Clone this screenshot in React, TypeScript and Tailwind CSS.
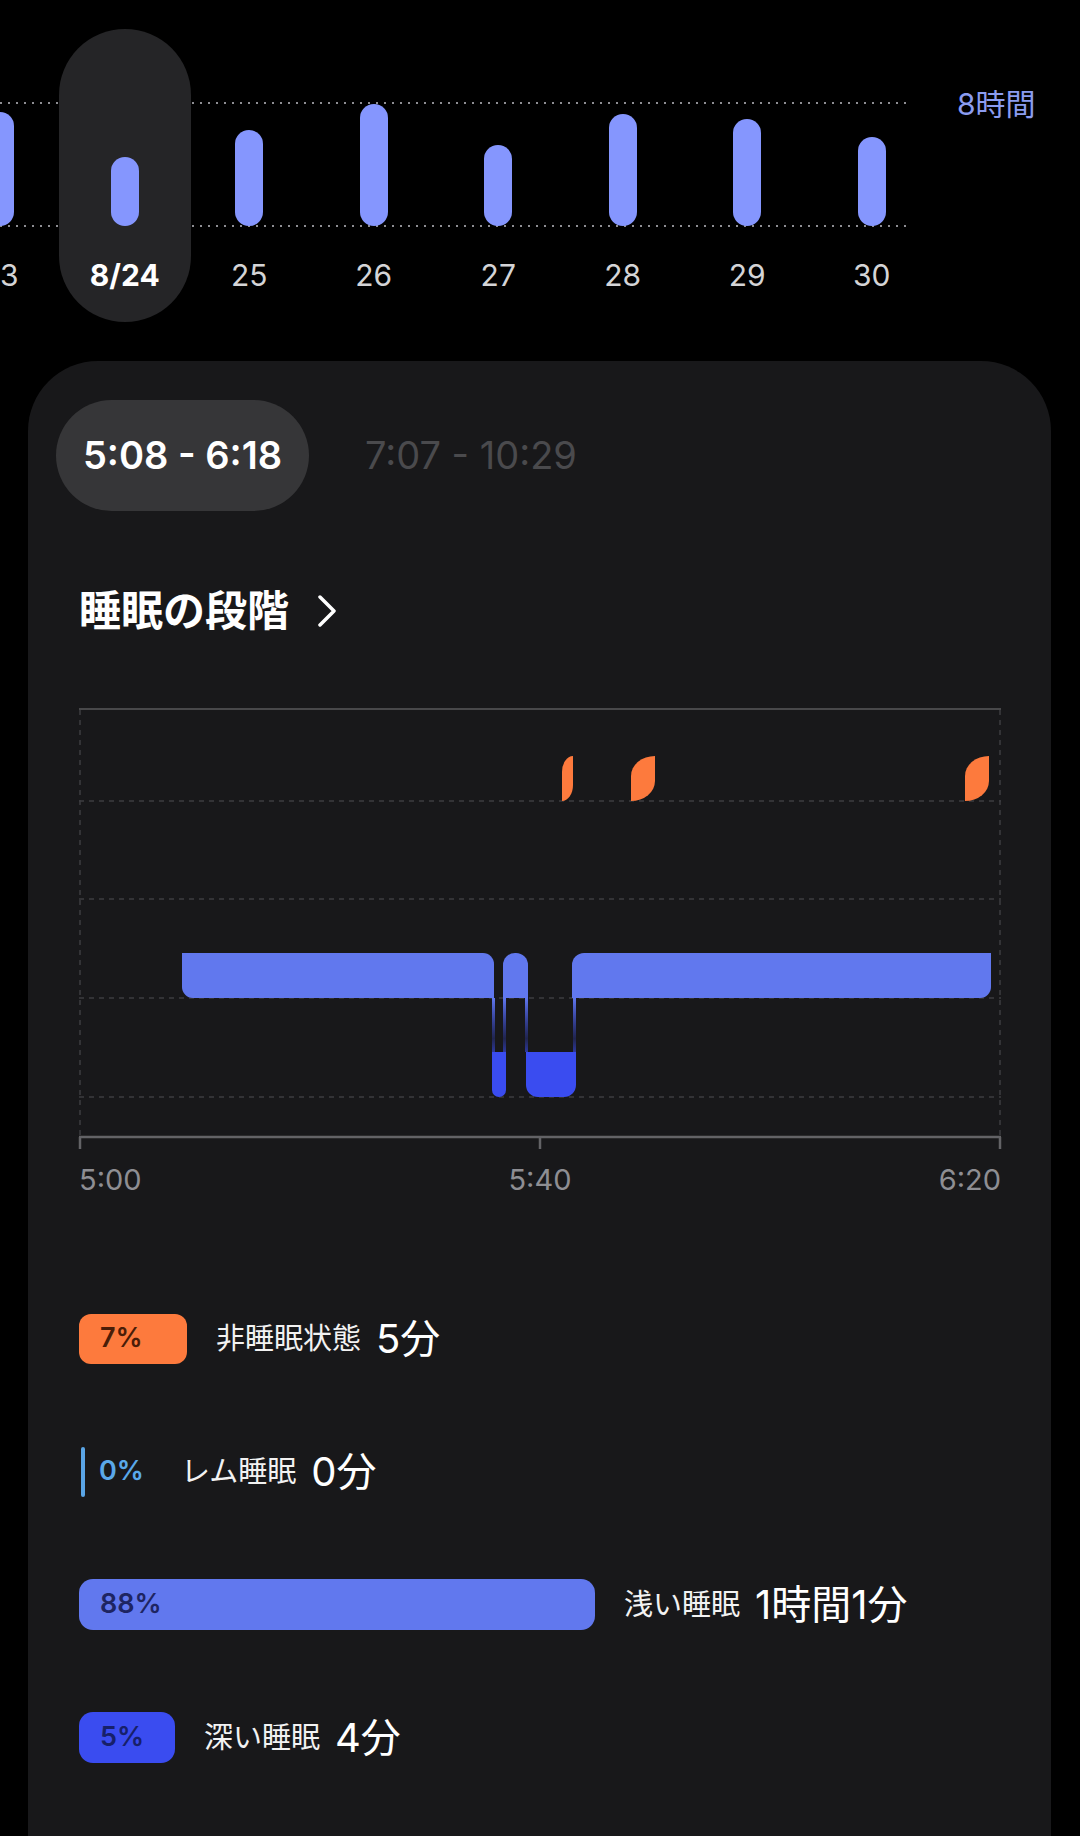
import React from "react";

type Day = { label: string; h: number; active?: boolean };

const days: Day[] = [
  { label: "23", h: 114 },
  { label: "8/24", h: 69, active: true },
  { label: "25", h: 96 },
  { label: "26", h: 122 },
  { label: "27", h: 81 },
  { label: "28", h: 112 },
  { label: "29", h: 107 },
  { label: "30", h: 89 },
];

// rect with per-corner radii: tl, tr, br, bl
function rr(x: number, y: number, w: number, h: number, r: [number, number, number, number]) {
  const [tl, tr, br, bl] = r;
  return `M${x + tl},${y} H${x + w - tr} A${tr},${tr} 0 0 1 ${x + w},${y + tr} V${y + h - br} A${br},${br} 0 0 1 ${x + w - br},${y + h} H${x + bl} A${bl},${bl} 0 0 1 ${x},${y + h - bl} V${y + tl} A${tl},${tl} 0 0 1 ${x + tl},${y} Z`;
}

function leaf(x: number, w: number, r: number) {
  const top = 48;
  const bottom = 93;
  return `M${x},${bottom} V${top + r} A${w},${r} 0 0 1 ${x + w},${top} V${bottom - r} A${w},${r} 0 0 1 ${x},${bottom} Z`;
}

function DayColumn({ d }: { d: Day }) {
  return (
    <div className="relative mt-[29px] flex h-[293px] w-[124.5px] flex-none flex-col items-center">
      {d.active && <div className="absolute inset-y-0 -inset-x-[4px] rounded-full bg-[#252527]" />}
      <div className="relative mt-[74px] flex h-[123px] items-end">
        <div className="w-[28px] rounded-full bg-[#8596fe]" style={{ height: d.h }} />
      </div>
      <div
        className={
          d.active
            ? "relative mt-[31px] text-[30px] leading-[36px] font-bold text-white"
            : "relative mt-[31px] text-[30px] leading-[36px] text-[#d4d4d6]"
        }
      >
        {d.label}
      </div>
    </div>
  );
}

function StageChart() {
  const light = "#6178ee";
  const deep = "#3a4cf0";
  return (
    <svg width="922" height="442" className="overflow-visible">
      <defs>
        <linearGradient id="conn" x1="0" y1="0" x2="0" y2="1">
          <stop offset="0" stopColor={light} stopOpacity="1" />
          <stop offset="0.75" stopColor={deep} stopOpacity="0.25" />
          <stop offset="1" stopColor={deep} stopOpacity="0.6" />
        </linearGradient>
      </defs>
      {/* grid */}
      <line x1="0" y1="1" x2="922" y2="1" stroke="#48484a" strokeWidth="2" />
      {[93, 191, 290, 389].map((y) => (
        <line key={y} x1="0" y1={y} x2="922" y2={y} stroke="#3d3d40" strokeWidth="1.5" strokeDasharray="5 5" />
      ))}
      <line x1="1" y1="2" x2="1" y2="429" stroke="#3d3d40" strokeWidth="1.5" strokeDasharray="5 5" />
      <line x1="921" y1="2" x2="921" y2="429" stroke="#3d3d40" strokeWidth="1.5" strokeDasharray="5 5" />
      <line x1="0" y1="429" x2="922" y2="429" stroke="#636366" strokeWidth="2.5" />
      {[1, 461, 921].map((x) => (
        <line key={x} x1={x} y1="429" x2={x} y2="441" stroke="#636366" strokeWidth="2.5" />
      ))}

      {/* connectors */}
      {[413, 424, 446, 494].map((x) => (
        <rect key={x} x={x} y="290" width="3" height="54" fill="url(#conn)" />
      ))}

      {/* light sleep */}
      <path d={rr(103, 245, 312, 45, [0, 11, 0, 11])} fill={light} />
      <path d={rr(424, 245, 25, 45, [12, 12, 0, 0])} fill={light} />
      <path d={rr(493, 245, 419, 45, [12, 0, 11, 0])} fill={light} />

      {/* deep sleep */}
      <path d={rr(413, 344, 14, 45, [0, 0, 7, 7])} fill={deep} />
      <path d={rr(447, 344, 50, 45, [0, 0, 12, 12])} fill={deep} />

      {/* awake */}
      <path d={leaf(483, 11, 16)} fill="#fd7a3d" />
      <path d={leaf(552, 24, 20)} fill="#fd7a3d" />
      <path d={leaf(886, 24, 20)} fill="#fd7a3d" />
    </svg>
  );
}

export default function App() {
  return (
    <div className="h-[1836px] overflow-hidden bg-black font-['Inter','Noto_Sans_CJK_JP',sans-serif]">
      {/* Week bars */}
      <div className="relative h-[361px]">
        <div className="absolute left-0 top-[102px] h-[2px] w-[911px] bg-[repeating-linear-gradient(90deg,#8e8e93_0_2px,transparent_2px_8px)]" />
        <div className="absolute left-0 top-[225px] h-[2px] w-[911px] bg-[repeating-linear-gradient(90deg,#8e8e93_0_2px,transparent_2px_8px)]" />
        <div className="relative -ml-[62px] flex">
          {days.map((d) => (
            <DayColumn key={d.label} d={d} />
          ))}
          <div className="ml-[23px] mt-[86px] flex-none text-[30px] leading-[36px] text-[#8b9cf0]">8時間</div>
        </div>
      </div>

      {/* Card */}
      <div className="ml-[28px] h-[1475px] w-[1023px] rounded-t-[70px] bg-[#18181a]">
        <div className="flex items-center pl-[28px] pt-[39px]">
          <div className="flex h-[111px] w-[253px] items-center justify-center rounded-full bg-[#363638] text-[38px] font-semibold text-white">
            5:08 - 6:18
          </div>
          <div className="ml-[56px] text-[38px] text-[#4a4a4d]">7:07 - 10:29</div>
        </div>

        <div className="px-[51px]">
          <div className="mt-[75px] flex h-[50px] items-center">
            <span className="text-[42px] leading-[50px] font-bold text-white">睡眠の段階</span>
            <svg width="20" height="32" viewBox="0 0 20 32" className="ml-[28px]">
              <path d="M3 2 L17 16 L3 30" fill="none" stroke="white" strokeWidth="3.5" strokeLinecap="round" strokeLinejoin="round" />
            </svg>
          </div>

          <div className="mt-[72px]">
            <StageChart />
          </div>
          <div className="mt-[12px] grid w-[922px] grid-cols-3 text-[29px] leading-[36px] text-[#8e8e93]">
            <span className="text-left">5:00</span>
            <span className="text-center">5:40</span>
            <span className="text-right">6:20</span>
          </div>

          {/* Legend */}
          <div className="mt-[115px] flex flex-col gap-[82px]">
            <div className="flex h-[51px] items-center">
              <div className="flex h-[50px] w-[108px] items-center rounded-[12px] bg-[#fd7a3d] pl-[21px] text-[27px] font-semibold text-[#4a1d08]">
                7%
              </div>
              <span className="ml-[29px] text-[29px] text-[#f2f2f2]">非睡眠状態</span>
              <span className="ml-[15px] text-[40px] text-white">5分</span>
            </div>

            <div className="flex h-[51px] items-center">
              <div className="ml-[2px] h-[50px] w-[4px] rounded-full bg-[#5aa5e6]" />
              <span className="ml-[14px] text-[27px] font-semibold text-[#5aa8ea]">0%</span>
              <span className="ml-[37px] text-[29px] text-[#f2f2f2]">レム睡眠</span>
              <span className="ml-[15px] text-[40px] text-white">0分</span>
            </div>

            <div className="flex h-[51px] items-center">
              <div className="flex h-[51px] w-[516px] items-center rounded-[14px] bg-[#6178ee] pl-[21px] text-[27px] font-semibold text-[#1e2562]">
                88%
              </div>
              <span className="ml-[29px] text-[29px] text-[#f2f2f2]">浅い睡眠</span>
              <span className="ml-[15px] text-[40px] text-white">1時間1分</span>
            </div>

            <div className="flex h-[51px] items-center">
              <div className="flex h-[51px] w-[96px] items-center rounded-[14px] bg-[#3a4cf0] pl-[21px] text-[27px] font-semibold text-[#17206a]">
                5%
              </div>
              <span className="ml-[29px] text-[29px] text-[#f2f2f2]">深い睡眠</span>
              <span className="ml-[15px] text-[40px] text-white">4分</span>
            </div>
          </div>
        </div>
      </div>
    </div>
  );
}
